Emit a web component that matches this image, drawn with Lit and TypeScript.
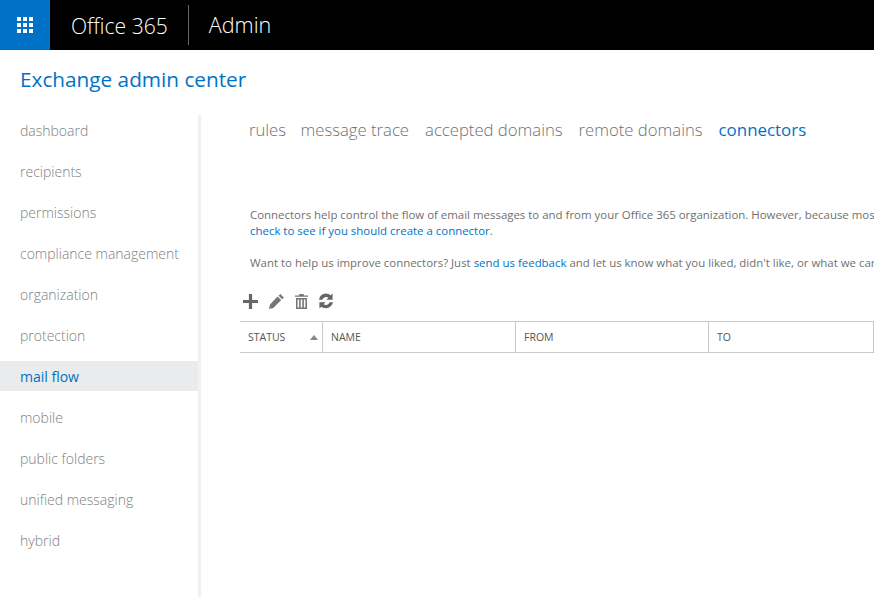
import { LitElement, html, css } from 'lit';
import { customElement } from 'lit/decorators.js';

const NAV = [
  'dashboard',
  'recipients',
  'permissions',
  'compliance management',
  'organization',
  'protection',
  'mail flow',
  'mobile',
  'public folders',
  'unified messaging',
  'hybrid',
];

const TABS = ['rules', 'message trace', 'accepted domains', 'remote domains', 'connectors'];

@customElement('app-root')
export class AppRoot extends LitElement {
  static styles = css`
    :host {
      display: block;
      width: 874px;
      height: 597px;
      overflow: hidden;
      background: #fff;
      font-family: 'Open Sans', 'Noto Sans', sans-serif;
      color: #666;
    }

    .topbar {
      display: flex;
      align-items: center;
      height: 50px;
      background: #000;
      color: #fff;
    }

    .tile {
      display: flex;
      align-items: center;
      justify-content: center;
      width: 50px;
      height: 50px;
      background: #0072c6;
    }

    .brand {
      margin-left: 21px;
      padding-right: 20px;
      height: 40px;
      line-height: 42px;
      font-size: 21.1px;
      font-weight: 300;
      border-right: 1px solid #666;
    }

    .app {
      margin-left: 20px;
      font-size: 21.6px;
      line-height: 42px;
      font-weight: 300;
    }

    h1 {
      margin: 0;
      padding: 15px 0 0 20px;
      height: 49px;
      box-sizing: border-box;
      font-size: 20.75px;
      line-height: 28px;
      font-weight: 400;
      color: #0072c6;
    }

    .body {
      display: flex;
      margin-top: 16px;
      height: 482px;
    }

    nav {
      flex: none;
      width: 198px;
      border-right: 3px solid #f1f1f1;
    }

    nav div {
      height: 30px;
      line-height: 32px;
      margin-bottom: 11px;
      padding-left: 20px;
      font-size: 14px;
      font-weight: 300;
      color: #808080;
      white-space: nowrap;
    }

    nav div.on {
      background: #eaebec;
      color: #0072c6;
      font-weight: 400;
    }

    main {
      flex: 1;
      min-width: 0;
      padding-left: 39px;
      overflow: hidden;
    }

    .tabs {
      display: flex;
      gap: 16px;
      padding: 3px 0 0 9px;
      height: 92px;
      box-sizing: border-box;
      font-size: 16.7px;
      line-height: 24px;
      font-weight: 300;
      color: #707070;
      white-space: nowrap;
    }

    .tabs span:first-child {
      margin-right: -1.5px;
    }

    .tabs .on {
      color: #0072c6;
      font-weight: 400;
      font-size: 16.9px;
    }

    .intro {
      margin: 0 0 0 10px;
      font-size: 11.45px;
      line-height: 16px;
      color: #707070;
      white-space: nowrap;
    }

    .intro + .intro {
      margin-top: 16px;
    }

    a {
      color: #0072c6;
      text-decoration: none;
    }

    .tools {
      display: flex;
      align-items: center;
      gap: 10px;
      height: 24px;
      margin: 18px 0 8px 3px;
    }

    .grid {
      display: grid;
      grid-template-columns: 83px 193px 193px 165px;
      width: 634px;
      height: 32px;
      box-sizing: border-box;
      border-top: 1px solid #c8c8c8;
      border-bottom: 1px solid #c8c8c8;
      font-size: 10.5px;
      line-height: 30px;
      color: #555;
    }

    .grid div {
      padding-left: 8px;
      border-right: 1px solid #c8c8c8;
      white-space: nowrap;
    }

    .status {
      display: flex;
      align-items: center;
      justify-content: space-between;
      padding-right: 4px;
    }

    .arrow {
      width: 0;
      height: 0;
      border-left: 4px solid transparent;
      border-right: 4px solid transparent;
      border-bottom: 5px solid #7a8f7a;
    }
  `;

  render() {
    return html`
      <div class="topbar">
        <div class="tile">
          <svg width="18" height="18" viewBox="0 0 18 18" fill="#fff">
            ${[1, 7, 13].map((y) =>
              [1, 7, 13].map(
                (x) => html`<svg x=${x} y=${y} width="4" height="4"><rect width="4" height="4"></rect></svg>`
              )
            )}
          </svg>
        </div>
        <div class="brand">Office 365</div>
        <div class="app">Admin</div>
      </div>
      <h1>Exchange admin center</h1>
      <div class="body">
        <nav>
          ${NAV.map((n) => html`<div class=${n === 'mail flow' ? 'on' : ''}>${n}</div>`)}
        </nav>
        <main>
          <div class="tabs">
            ${TABS.map((t) => html`<span class=${t === 'connectors' ? 'on' : ''}>${t}</span>`)}
          </div>
          <p class="intro">
            Connectors help control the flow of email messages to and from your Office 365 organization. However, because most<br />
            <a>check to see if you should create a connector</a>.
          </p>
          <p class="intro">
            Want to help us improve connectors? Just <a>send us feedback</a> and let us know what you liked, didn't like, or what we can
          </p>
          <div class="tools">
            <svg width="15" height="15" viewBox="0 0 15 15" fill="#666">
              <path d="M5.9 0h3.2v5.9H15v3.2H9.1V15H5.9V9.1H0V5.9h5.9z"></path>
            </svg>
            <svg width="17" height="17" viewBox="0 0 17 17" fill="#777">
              <path d="M12.3 1l3.6 3.4-1.7 1.8-3.6-3.5zM9.6 3.6l3.6 3.5-7.9 7.8-4.3 1.1 1-4.5z"></path>
            </svg>
            <svg width="13" height="15" viewBox="0 0 13 15" fill="#777">
              <path d="M4.5 0h4l.5 1.5h4v1.2H0V1.5h4zM1 4h11v11H1zM2.6 5.4v8.2h1.5V5.4zm3.1 0v8.2h1.6V5.4zm3.2 0v8.2h1.5V5.4z" fill-rule="evenodd"></path>
            </svg>
            <svg width="16" height="16" viewBox="0 0 16 16" fill="#666">
              <path d="M8 .6a7.4 7.4 0 0 1 4.7 1.7L14.6.6v6.2H8.4l2-2A4 4 0 0 0 4.3 6.8H1A7.4 7.4 0 0 1 8 .6zM1.4 9.2h6.2l-2 2a4 4 0 0 0 6.1-2H15a7.4 7.4 0 0 1-11.7 4.5L1.4 15.4z"></path>
            </svg>
          </div>
          <div class="grid">
            <div class="status"><span>STATUS</span><span class="arrow"></span></div>
            <div>NAME</div>
            <div>FROM</div>
            <div>TO</div>
          </div>
        </main>
      </div>
    `;
  }
}
